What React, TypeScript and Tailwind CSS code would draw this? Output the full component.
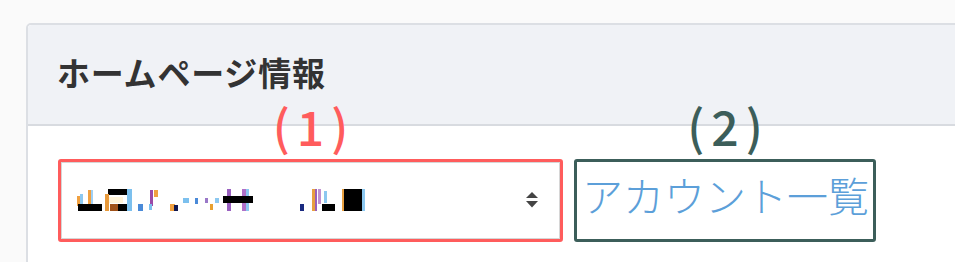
import React from "react";

type Cell = [number, number, number, number, string];

// mosaic cells in absolute page coordinates, origin of the svg at (75,186)
const cells: Cell[] = [
  [77, 195, 3, 10, "#f0a040"],
  [80, 193, 3, 12, "#8cc8f0"],
  [88, 189, 3, 15, "#f0a040"],
  [91, 189, 2, 15, "#9fd0f5"],
  [78, 203, 24, 7, "#000000"],
  [108, 188, 24, 6, "#000000"],
  [105, 193, 4, 17, "#e89a3c"],
  [110, 203, 8, 7, "#a0521a"],
  [118, 203, 10, 7, "#000000"],
  [127, 188, 5, 22, "#7cc0ee"],
  [109, 196, 14, 6, "#fff3d8"],
  [138, 203, 5, 7, "#4a8ad8"],
  [150, 189, 3, 16, "#9a4aa8"],
  [154, 189, 4, 7, "#f0a040"],
  [149, 203, 3, 6, "#7cc0ee"],
  [170, 203, 5, 7, "#f0a040"],
  [174, 204, 4, 6, "#101850"],
  [183, 197, 6, 5, "#7cc0ee"],
  [195, 197, 3, 6, "#4a8ad8"],
  [205, 197, 3, 5, "#9a78c8"],
  [210, 203, 3, 6, "#e8a030"],
  [215, 197, 4, 5, "#8cc8f0"],
  [227, 188, 4, 22, "#9a60c0"],
  [242, 188, 4, 22, "#b070c8"],
  [246, 188, 3, 22, "#8cc8f0"],
  [223, 195, 30, 7, "#000000"],
  [300, 203, 4, 7, "#1a2a80"],
  [312, 188, 3, 22, "#e8a040"],
  [315, 188, 2, 22, "#9a60b8"],
  [318, 188, 3, 15, "#c090d0"],
  [322, 203, 13, 7, "#000000"],
  [324, 190, 3, 12, "#8cc8f0"],
  [342, 188, 3, 22, "#e8a040"],
  [344, 188, 18, 22, "#000000"],
  [362, 188, 3, 22, "#8cc8f0"],
];

function Mosaic() {
  return (
    <svg width="292" height="26" viewBox="75 186 292 26" className="block">
      <g className="blur-[0.6px]">
        {cells.map(([x, y, w, h, fill], i) => (
          <rect key={i} x={x} y={y} width={w} height={h} fill={fill} />
        ))}
      </g>
    </svg>
  );
}

function Arrows() {
  return (
    <svg width="16" height="18" viewBox="0 0 16 18" className="block">
      <g className="blur-[0.5px]" fill="#444">
        <path d="M8 1 L14 7 L2 7 Z" />
        <path d="M2 10 L14 10 L8 16.5 Z" />
      </g>
    </svg>
  );
}

export default function App() {
  return (
    <div className="w-[955px] h-[262px] overflow-hidden bg-[#fafafa] pt-[23px] pl-[26px] font-['Noto_Sans_CJK_JP',sans-serif]">
      <div className="w-[960px] h-[260px] rounded-[5px] border-2 border-[#dcdfe4] bg-white">
        <div className="h-[101px] bg-[#f0f2f6] border-b-2 border-[#d8dbe0] rounded-t-[4px] flex items-center pl-[29px] pb-[5px]">
          <h2 className="text-[33px] font-bold text-[#333] leading-none tracking-[0.8px]">ホームページ情報</h2>
        </div>
        <div className="pt-[33px] pl-[30px] flex gap-[11px]">
          <div className="relative w-[505px] h-[83px] border-[3px] border-[#ff5c5c] rounded-[3px]">
            <span className="absolute left-1/2 -translate-x-1/2 top-[-61px] pl-[7px] text-[48px] font-medium leading-none tracking-[7px] text-[#ff5c5c] whitespace-nowrap">
              (1)
            </span>
            <div className="h-full border border-[#d6d6d6] flex items-center justify-between pl-[13px] pr-[19px] pb-[2px]">
              <Mosaic />
              <Arrows />
            </div>
          </div>
          <div className="relative w-[302px] h-[83px] border-[3px] border-[#3c5e5a] rounded-[3px] flex items-center pl-[5px] pb-[12px]">
            <span className="absolute left-1/2 -translate-x-1/2 top-[-61px] pl-[7px] text-[48px] font-medium leading-none tracking-[7px] text-[#3c5e5a] whitespace-nowrap">
              (2)
            </span>
            <a className="text-[41px] leading-none text-[#5c9fd9] font-light whitespace-nowrap">アカウント一覧</a>
          </div>
        </div>
      </div>
    </div>
  );
}
